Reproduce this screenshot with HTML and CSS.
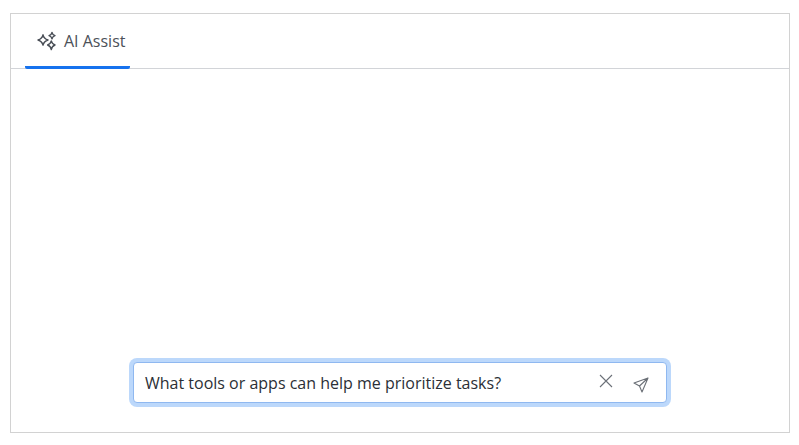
FILE: index.html
```html
<!DOCTYPE html>
<html lang="en">
<head>
<meta charset="utf-8">
<title>AI Assist</title>
<link rel="stylesheet" href="styles.css">
</head>
<body>
<main class="panel">
  <header class="tabs">
    <div class="tab">
      <svg class="spark" width="20" height="20" viewBox="0 0 20 20" fill="none" stroke="#4a4f57" stroke-width="1.4" stroke-linejoin="round">
        <path d="M7 3.8 C7.6 6.6 8.8 7.9 12 9 C8.8 10.1 7.6 11.4 7 14.2 C6.4 11.4 5.2 10.1 2 9 C5.2 7.9 6.4 6.6 7 3.8Z"/>
        <path d="M16 1.4 C16.3 3.2 17 4 19 4.6 C17 5.2 16.3 6 16 7.8 C15.7 6 15 5.2 13 4.6 C15 4 15.7 3.2 16 1.4Z"/>
        <path d="M15.3 9.9 C15.7 12 16.6 13.1 19 14 C16.6 14.9 15.7 16 15.3 18.6 C14.9 16 14 14.9 11.6 14 C14 13.1 14.9 12 15.3 9.9Z"/>
      </svg>
      <span class="tab-label">AI Assist</span>
    </div>
  </header>
  <section class="content">
    <div class="prompt">
      <span class="prompt-text">What tools or apps can help me prioritize tasks?</span>
      <svg class="clear" width="16" height="16" viewBox="0 0 16 16" fill="none" stroke="#6b7077" stroke-width="1.1">
        <path d="M2 2 L14 14 M14 2 L2 14"/>
      </svg>
      <svg class="send" width="16" height="16" viewBox="0 0 16 16" fill="none" stroke="#6b7077" stroke-width="1.1" stroke-linejoin="round">
        <path d="M15 1 L1 6 L6.5 9 L9 15 Z M6.5 9 L15 1"/>
      </svg>
    </div>
  </section>
</main>
</body>
</html>
```
FILE: styles.css
```css
* { box-sizing: border-box; }
html, body { margin: 0; height: 100%; background: #fff; }
body { padding: 13px 9px 12px 10px; font-family: "Open Sans", "Noto Sans", sans-serif; }
.panel {
  height: 420px;
  border: 1px solid #d2d2d2;
  display: flex;
  flex-direction: column;
}
.tabs {
  height: 55px;
  border-bottom: 1px solid #d2d4d8;
  padding-left: 14px;
  flex: none;
}
.tab {
  width: 105px;
  height: 55px;
  display: flex;
  align-items: center;
  gap: 8px;
  padding: 2px 0 0 11px;
  border-bottom: 3px solid #1672ee;
  border-radius: 2px;
  color: #4c5158;
  font-size: 16px;
}
.spark { flex: none; }
.content {
  flex: 1;
  display: flex;
  align-items: flex-end;
  justify-content: center;
  padding-bottom: 29px;
}
.prompt {
  width: 534px;
  height: 41px;
  background: #fff;
  border: 1px solid #8fb8f0;
  border-radius: 4px;
  box-shadow: 0 0 0 4px #bcd8fb;
  display: flex;
  align-items: center;
  padding: 0 17px 0 11px;
  color: #2b2f36;
  font-size: 16px;
}
.prompt-text { flex: 1; white-space: nowrap; }
.clear { flex: none; margin: -4px 19px 0 0; }
.send { flex: none; margin-top: 5px; }
```
